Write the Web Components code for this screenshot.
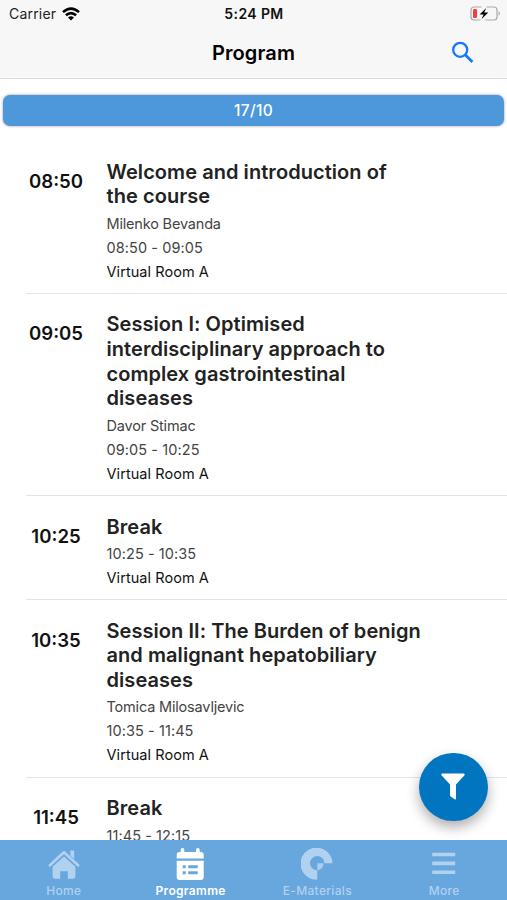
<!DOCTYPE html>
<html lang="en">
<head>
<meta charset="utf-8">
<meta name="viewport" content="width=device-width, initial-scale=1">
<title>Program</title>
<style>
  html, body { margin: 0; height: 100%; }
  body {
    font-family: Inter, "Liberation Sans", sans-serif;
    background: #fff;
    overflow: hidden;
  }
</style>
</head>
<body>
<program-app>
  <status-bar slot="top"></status-bar>
  <page-header slot="top">Program</page-header>
  <day-banner>17/10</day-banner>
  <session-item time="08:50" end="09:05" room="Virtual Room A" speaker="Milenko Bevanda">Welcome and introduction of<br>the course</session-item>
  <session-item time="09:05" end="10:25" room="Virtual Room A" speaker="Davor Stimac">Session I: Optimised<br>interdisciplinary approach to<br>complex gastrointestinal<br>diseases</session-item>
  <session-item time="10:25" end="10:35" room="Virtual Room A">Break</session-item>
  <session-item time="10:35" end="11:45" room="Virtual Room A" speaker="Tomica Milosavljevic">Session II: The Burden of benign<br>and malignant hepatobiliary<br>diseases</session-item>
  <session-item time="11:45" end="12:15" room="Virtual Room A">Break</session-item>
  <filter-button slot="fab"></filter-button>
  <tab-bar slot="tabs">
    <tab-item icon="home">Home</tab-item>
    <tab-item icon="calendar" active>Programme</tab-item>
    <tab-item icon="materials">E-Materials</tab-item>
    <tab-item icon="more">More</tab-item>
  </tab-bar>
</program-app>

<script>
class ProgramApp extends HTMLElement {
  connectedCallback() {
    this.attachShadow({ mode: 'open' });
    this.shadowRoot.innerHTML = `
      <style>
        :host { display: flex; flex-direction: column; height: 100vh; position: relative; }
        .top { background: #f7f7f7; border-bottom: 1px solid #dcdcdc; height: 78px; flex: none; }
        main { flex: 1; min-height: 0; overflow: hidden; padding-top: 16px; }
      </style>
      <div class="top"><slot name="top"></slot></div>
      <main><slot></slot></main>
      <slot name="fab"></slot>
      <slot name="tabs"></slot>
    `;
  }
}

class StatusBar extends HTMLElement {
  connectedCallback() {
    this.attachShadow({ mode: 'open' });
    this.shadowRoot.innerHTML = `
      <style>
        :host { display: grid; grid-template-columns: 1fr auto 1fr; align-items: center; height: 27px; padding: 0 6px 0 9px; font-size: 14px; color: #111; }
        .left { display: flex; align-items: center; gap: 6px; }
        .carrier { letter-spacing: .2px; color: #222; }
        .clock { font-weight: 600; letter-spacing: .4px; margin-left: -2px; }
        .battery { justify-self: end; }
        svg { display: block; }
      </style>
      <div class="left">
        <span class="carrier">Carrier</span>
        <svg width="18" height="14" viewBox="0 0 18 14" fill="none" stroke="#000" stroke-width="2.6">
          <path d="M1 5.1Q9-2 17 5.1"/>
          <path d="M3.9 8.3Q9 3.9 14.1 8.3"/>
          <path d="M9 13.6L6 10.5Q9 8 12 10.5Z" fill="#000" stroke="none"/>
        </svg>
      </div>
      <span class="clock">5:24 PM</span>
      <svg class="battery" width="31" height="15" viewBox="0 0 31 15">
        <path d="M11.5 1H4a3 3 0 0 0-3 3v7a3 3 0 0 0 3 3h6.5M16.5 1H24a3 3 0 0 1 3 3v7a3 3 0 0 1-3 3h-8.5" fill="none" stroke="#a9a9a9" stroke-width="1.2"/>
        <path d="M28.6 5q2.6 2.5 0 5z" fill="#a9a9a9"/>
        <rect x="3" y="3" width="4" height="9" rx="1.2" fill="#fb3b3b"/>
        <path d="M16.2 2L9.6 8.4h4L11.6 13l6.7-6.5h-4.1z" fill="#000"/>
      </svg>
    `;
  }
}

class PageHeader extends HTMLElement {
  connectedCallback() {
    this.attachShadow({ mode: 'open' });
    this.shadowRoot.innerHTML = `
      <style>
        :host { display: grid; grid-template-columns: 1fr auto 1fr; align-items: center; height: 51px; padding: 0 32px; }
        h1 { grid-column: 2; margin: 0; font-size: 20px; font-weight: 600; color: #000; letter-spacing: .1px; }
        svg { justify-self: end; margin-right: 1px; }
      </style>
      <h1><slot></slot></h1>
      <svg width="23" height="23" viewBox="0 0 23 23" fill="none" stroke="#1679fb">
        <circle cx="9.2" cy="8.8" r="7" stroke-width="2.3"/>
        <path d="M14.2 13.8l7.2 7.2" stroke-width="2.8"/>
      </svg>
    `;
  }
}

class DayBanner extends HTMLElement {
  connectedCallback() {
    this.attachShadow({ mode: 'open' });
    this.shadowRoot.innerHTML = `
      <style>
        :host {
          display: flex; align-items: center; justify-content: center;
          height: 31px; margin: 0 3px 15px 3px; border-radius: 7px;
          background: #4d98da; color: #fff;
          font-size: 15.5px; font-weight: 500; letter-spacing: .3px;
          box-shadow: 0 0 3px rgba(0, 0, 0, .4);
        }
      </style>
      <slot></slot>
    `;
  }
}

class SessionItem extends HTMLElement {
  connectedCallback() {
    const time = this.getAttribute('time');
    const end = this.getAttribute('end');
    const speaker = this.getAttribute('speaker');
    this.attachShadow({ mode: 'open' });
    this.shadowRoot.innerHTML = `
      <style>
        :host { display: flex; margin-left: 26px; padding: 18.6px 0 9.1px; border-bottom: 1px solid #e4e4e4; }
        time { width: 60px; margin-right: 20.5px; padding-top: 9px; flex: none; text-align: center; font-size: 18.6px; line-height: 25px; font-weight: 600; color: #111; }
        h2 { margin: 0 0 2.7px; font-size: 20px; line-height: 24.7px; font-weight: 600; letter-spacing: .06px; color: #222; white-space: nowrap; }
        p { margin: 0; font-size: 14.5px; line-height: 24px; color: #444; }
        .speaker { letter-spacing: -.18px; }
        .hours { letter-spacing: .08px; }
        .room { color: #111; letter-spacing: .06px; }
      </style>
      <time>${time}</time>
      <div>
        <h2><slot></slot></h2>
        ${speaker ? `<p class="speaker">${speaker}</p>` : ''}
        <p class="hours">${time} - ${end}</p>
        <p class="room">${this.getAttribute('room')}</p>
      </div>
    `;
  }
}

class FilterButton extends HTMLElement {
  connectedCallback() {
    this.attachShadow({ mode: 'open' });
    this.shadowRoot.innerHTML = `
      <style>
        /* floats over the session list */
        :host {
          position: absolute; right: 19.5px; bottom: 79px;
          display: flex; align-items: center; justify-content: center;
          width: 68.5px; height: 68.5px; border-radius: 50%;
          background: #0275c1;
          box-shadow: 0 6px 13px rgba(0, 0, 0, .32);
        }
      </style>
      <svg width="24" height="27" viewBox="0 0 24 27" fill="#fff">
        <path d="M1.2.5h21.6q1.5.5.5 2L15 11.6V25.5q-.3 1.5-1.8.6L9.7 23.4Q9 22.8 9 22V11.6L.7 2.5Q-.3 1 1.2.5z"/>
      </svg>
    `;
  }
}

class TabBar extends HTMLElement {
  connectedCallback() {
    this.attachShadow({ mode: 'open' });
    this.shadowRoot.innerHTML = `
      <style>
        :host { display: flex; flex: none; height: 60px; background: #68a6de; }
        ::slotted(*) { flex: 1; }
      </style>
      <slot></slot>
    `;
  }
}

const TAB_ICONS = {
  home: `
    <path d="M1.9 17.2L16 4.2l14.1 13" fill="none" stroke="currentColor" stroke-width="2.8" stroke-linecap="round" stroke-linejoin="round"/>
    <path d="M22.3 2.5h3.9v8.5l-3.9-3.5z"/>
    <path d="M16 8.4L27.4 18.8V28.5q0 2.3-2.3 2.3h-5.3v-7.5h-7.6v7.5H6.9q-2.3 0-2.3-2.3V18.8z"/>`,
  calendar: `
    <g transform="translate(-.8)">
    <path d="M2.5 10.5V7q0-3 3-3h1V1.7q0-1.7 1.8-1.7t1.8 1.7V4h11.8V1.7q0-1.7 1.8-1.7t1.8 1.7V4h1q3 0 3 3v3.5z"/>
    <path fill-rule="evenodd" d="M2.5 12.7h27v16.3q0 3-3 3h-21q-3 0-3-3zM8.5 17.3v3h3v-3zM14 17.3v3h9.5v-3zM8.5 23.3v3h3v-3zM14 23.3v3h9.5v-3z"/>
    </g>`,
  materials: `
    <path d="M16.3 31.6A16 16 0 1 1 31.5 15.2H23.4A7.2 7.2 0 1 0 16.3 22.4z"/>
    <path d="M16.3 15.2h6.2q.2 5.4-6.2 7.4z" opacity=".9"/>`,
  more: `
    <path d="M4.2 4.7h23v3.6h-23zM4.2 13.6h23v3.6h-23zM4.2 22.5h23v3.6h-23z"/>`
};

class TabItem extends HTMLElement {
  connectedCallback() {
    this.attachShadow({ mode: 'open' });
    this.shadowRoot.innerHTML = `
      <style>
        :host { display: flex; flex-direction: column; align-items: center; padding: 8px 0 0 1px; color: #b0d1f0; font-size: 12px; font-weight: 500; letter-spacing: .32px; }
        :host([active]) { color: #fff; font-weight: 600; }
        svg { display: block; }
        span { line-height: 16px; margin-top: 3px; }
      </style>
      <svg width="32" height="32" viewBox="0 0 32 32" fill="currentColor">${TAB_ICONS[this.getAttribute('icon')]}</svg>
      <span><slot></slot></span>
    `;
  }
}

customElements.define('program-app', ProgramApp);
customElements.define('status-bar', StatusBar);
customElements.define('page-header', PageHeader);
customElements.define('day-banner', DayBanner);
customElements.define('session-item', SessionItem);
customElements.define('filter-button', FilterButton);
customElements.define('tab-bar', TabBar);
customElements.define('tab-item', TabItem);
</script>
</body>
</html>
